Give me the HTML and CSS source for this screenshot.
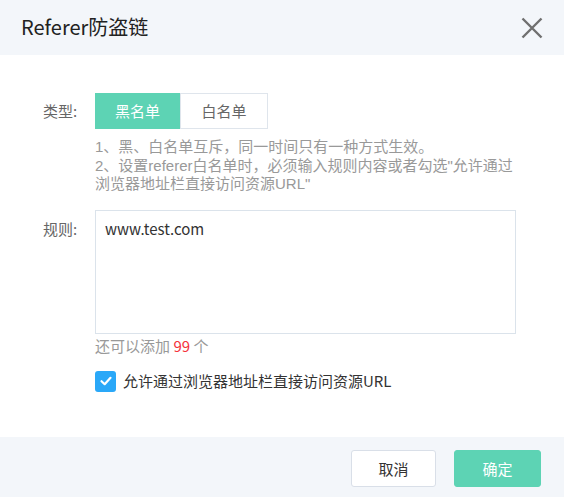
FILE: index.html
```html
<!DOCTYPE html>
<html lang="zh">
<head>
<meta charset="utf-8">
<link rel="stylesheet" href="styles.css">
</head>
<body>
<div class="dialog">
  <div class="header">
    <div class="title">Referer防盗链</div>
    <svg class="close" width="22" height="22" viewBox="0 0 22 22"><path d="M1.5 1.5 L20.5 20.5 M20.5 1.5 L1.5 20.5" stroke="#6f6f6f" stroke-width="2.4" fill="none"/></svg>
  </div>
  <div class="body">
    <div class="row">
      <div class="label label-type">类型:</div>
      <div class="field">
        <div class="seg">
          <div class="seg-btn active">黑名单</div>
          <div class="seg-btn">白名单</div>
        </div>
        <div class="hint">
          <div class="hint-line">1、黑、白名单互斥，同一时间只有一种方式生效。</div>
          <div class="hint-line">2、设置referer白名单时，必须输入规则内容或者勾选"允许通过</div>
          <div class="hint-line">浏览器地址栏直接访问资源URL"</div>
        </div>
      </div>
    </div>
    <div class="row row-rule">
      <div class="label label-rule">规则:</div>
      <div class="field">
        <div class="textarea">www.test.com</div>
        <div class="count">还可以添加 <span class="num">99</span> 个</div>
        <div class="check">
          <span class="box"><svg width="14" height="14" viewBox="0 0 14 14"><path d="M2.5 7.2 L5.7 10.2 L11.5 3.8" stroke="#fff" stroke-width="2.2" fill="none" stroke-linecap="round" stroke-linejoin="round"/></svg></span>
          <span class="check-label">允许通过浏览器地址栏直接访问资源URL</span>
        </div>
      </div>
    </div>
  </div>
  <div class="footer">
    <div class="btn btn-cancel">取消</div>
    <div class="btn btn-ok">确定</div>
  </div>
</div>
</body>
</html>
```

FILE: styles.css
```css
* { box-sizing: border-box; }
html, body { margin: 0; padding: 0; background: #fff; }
body { font-family: "Noto Sans CJK SC", "Noto Sans", sans-serif; }
.dialog { width: 564px; height: 497px; display: flex; flex-direction: column; }
.header { height: 55px; background: #f3f6fa; display: flex; align-items: center; justify-content: space-between; padding: 0 21px 0 21px; }
.title { font-size: 20px; color: #222; line-height: 24px; margin-top: -2px; }
.close { display: block; margin-top: 0; }
.body { height: 382px; padding: 38px 0 0 43px; }
.row { display: flex; }
.label { width: 52px; font-size: 15px; color: #666; line-height: 20px; }
.label-type { padding-top: 8px; }
.label-rule { padding-top: 9px; }
.field { display: flex; flex-direction: column; }
.seg { display: flex; }
.seg-btn { height: 36px; line-height: 34px; font-size: 15px; text-align: center; border: 1px solid #dfe5ec; color: #666; width: 88px; }
.seg-btn.active { width: 85px; background: #5dd3b4; border-color: #5dd3b4; color: #fff; }
.hint { margin-top: 9px; font-family: "Liberation Sans", "Noto Sans CJK SC", sans-serif; font-size: 15px; color: #999; white-space: nowrap; display: flex; flex-direction: column; }
.hint-line { height: 18.5px; line-height: 18.5px; }
.row-rule { margin-top: 16px; }
.textarea { width: 421px; height: 124px; border: 1px solid #dbe3eb; padding: 7px 9px; font-size: 15px; line-height: 22px; color: #333; }
.count { margin-top: 2px; font-size: 15px; line-height: 20px; color: #999; }
.num { color: #f5323c; }
.check { margin-top: 15px; display: flex; align-items: center; }
.box { width: 21px; height: 21px; border-radius: 3px; background: #2aa8f8; display: flex; align-items: center; justify-content: center; }
.box svg { display: block; }
.check-label { margin-left: 7px; font-size: 15px; color: #333; line-height: 20px; }
.footer { height: 60px; background: #f3f6fa; display: flex; justify-content: flex-end; padding: 13px 23px 0 0; gap: 18px; }
.btn { height: 37px; line-height: 35px; text-align: center; font-size: 15px; border-radius: 3px; border: 1px solid #d9dfe8; }
.btn-cancel { width: 85px; background: #fff; color: #333; }
.btn-ok { width: 87px; background: #5dd3b4; border-color: #5dd3b4; color: #fff; }
```
